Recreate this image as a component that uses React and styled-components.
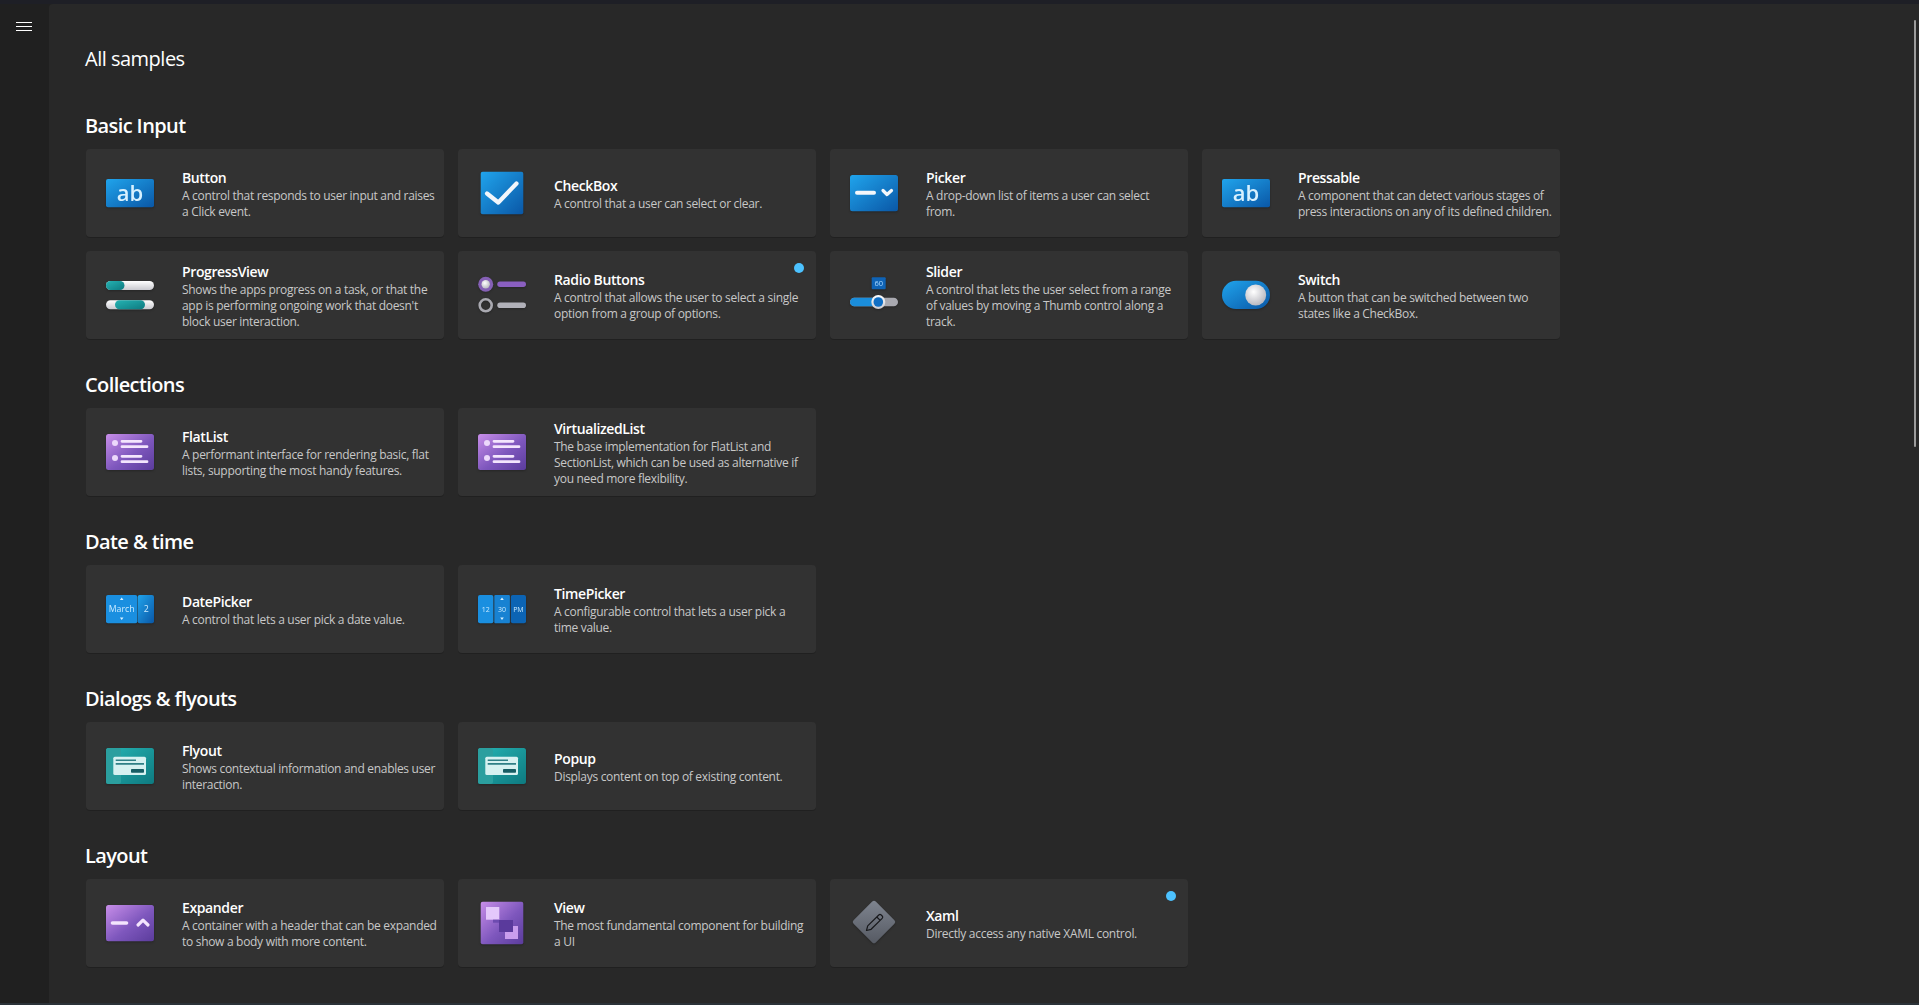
import styled, { createGlobalStyle } from "styled-components";

const GlobalStyle = createGlobalStyle`
  html, body {
    margin: 0;
    height: 100%;
    background: #202020;
    overflow: hidden;
  }
  #root {
    height: 100%;
  }
`;

const Window = styled.div`
  position: relative;
  height: 100vh;
  display: flex;
  flex-direction: column;
  font-family: "Open Sans", "Noto Sans", sans-serif;
  color: #fff;
`;

const TopStrip = styled.div`
  height: 4px;
  flex: none;
  background: #1e1f26;
`;

const BottomStrip = styled.div`
  height: 2px;
  flex: none;
  background: #2b3238;
`;

const Body = styled.div`
  flex: 1;
  min-height: 0;
  display: flex;
`;

const Sidebar = styled.nav`
  width: 49px;
  flex: none;
  background: #202020;
  padding-top: 15px;
  box-sizing: border-box;
`;

const MenuButton = styled.button`
  width: 48px;
  height: 16px;
  padding: 0;
  border: none;
  background: none;
  display: flex;
  align-items: center;
  justify-content: center;
`;

const Main = styled.main`
  flex: 1;
  min-width: 0;
  overflow: hidden;
  background: #282828;
  border-top-left-radius: 4px;
  padding: 41px 0 0 36px;
`;

const PageTitle = styled.h1`
  margin: 0 0 39px;
  font-size: 20px;
  line-height: 28px;
  font-weight: 400;
  letter-spacing: -0.5px;
`;

const Section = styled.section`
  margin-bottom: 32px;
`;

const SectionTitle = styled.h2`
  margin: 0 0 9px;
  font-size: 20px;
  line-height: 28px;
  font-weight: 600;
  letter-spacing: -0.6px;
`;

const CardGrid = styled.div`
  display: grid;
  grid-template-columns: repeat(4, 358px);
  grid-auto-rows: 88px;
  gap: 14px;
  padding-left: 1px;
`;

const Card = styled.div`
  position: relative;
  display: flex;
  align-items: center;
  padding: 0 7px 0 20px;
  background: #323232;
  border-radius: 4px;
  box-shadow: 0 1px 0 rgba(0, 0, 0, 0.18);
`;

const IconSvg = styled.svg`
  width: 48px;
  height: 48px;
  flex: none;
  margin-right: 28px;
  filter: drop-shadow(0 1px 1px rgba(0, 0, 0, 0.25));
`;

const CardText = styled.div`
  min-width: 0;
  margin-top: 2px;
`;

const CardTitle = styled.div`
  font-size: 14px;
  line-height: 20px;
  font-weight: 600;
  letter-spacing: -0.38px;
  color: #fff;
`;

const CardDescription = styled.div`
  font-size: 12px;
  line-height: 16px;
  letter-spacing: -0.3px;
  color: #c8c8c8;
  white-space: pre-line;
`;

const NewDot = styled.span`
  position: absolute;
  top: 12px;
  right: 12px;
  width: 10px;
  height: 10px;
  border-radius: 50%;
  background: #4cc2ff;
`;

const ScrollThumb = styled.div`
  position: absolute;
  top: 20px;
  right: 3px;
  width: 2px;
  height: 427px;
  background: #9c9c9c;
  border-radius: 1px;
`;

const HiddenDefs = styled.svg`
  position: absolute;
  width: 0;
  height: 0;
`;

const IconLabel = styled.text`
  font-family: "Open Sans", sans-serif;
  text-anchor: middle;
`;

function IconDefs() {
  return (
    <HiddenDefs aria-hidden="true">
      <defs>
        <linearGradient id="blue" x1="0" y1="0" x2="1" y2="1">
          <stop offset="0" stopColor="#20a4ec" />
          <stop offset="1" stopColor="#0a57a6" />
        </linearGradient>
        <linearGradient id="purple" x1="0" y1="0" x2="1" y2="1">
          <stop offset="0" stopColor="#c88ee9" />
          <stop offset="0.55" stopColor="#7e57bd" />
          <stop offset="1" stopColor="#5b3c9c" />
        </linearGradient>
        <linearGradient id="teal" x1="0" y1="0" x2="1" y2="1">
          <stop offset="0" stopColor="#25b3b3" />
          <stop offset="1" stopColor="#0e7a80" />
        </linearGradient>
        <linearGradient id="slate" x1="0" y1="0" x2="1" y2="1">
          <stop offset="0" stopColor="#7f8590" />
          <stop offset="1" stopColor="#555962" />
        </linearGradient>
        <linearGradient id="pale" x1="0" y1="0" x2="0" y2="1">
          <stop offset="0" stopColor="#ffffff" />
          <stop offset="1" stopColor="#c9c9cf" />
        </linearGradient>
        <radialGradient id="knob" cx="0.4" cy="0.35" r="0.7">
          <stop offset="0" stopColor="#ffffff" />
          <stop offset="1" stopColor="#b4b4bc" />
        </radialGradient>
      </defs>
    </HiddenDefs>
  );
}

function Icon({ children }) {
  return (
    <IconSvg viewBox="0 0 48 48" aria-hidden="true">
      {children}
    </IconSvg>
  );
}

const AbIcon = () => (
  <Icon>
    <rect y="10" width="48" height="28.3" rx="2" fill="url(#blue)" />
    <IconLabel x="24" y="31.5" fontSize="22" fontWeight="600" fill="#d8f1ff">
      ab
    </IconLabel>
  </Icon>
);

const CheckIcon = () => (
  <Icon>
    <rect x="2.7" y="2.7" width="42.6" height="42.6" rx="2" fill="url(#blue)" />
    <path
      d="M9 24.5l11.3 9L38.5 14.5"
      fill="none"
      stroke="#f2f6fb"
      strokeWidth="4.2"
      strokeLinecap="round"
      strokeLinejoin="round"
    />
  </Icon>
);

const PickerIcon = () => (
  <Icon>
    <rect y="6" width="48" height="36.3" rx="2.5" fill="url(#blue)" />
    <path d="M7 23.7h17" stroke="#f4f7fb" strokeWidth="4" strokeLinecap="round" />
    <path
      d="M33 21.5l4 4 4.5-4"
      fill="none"
      stroke="#f4f7fb"
      strokeWidth="3.2"
      strokeLinecap="round"
      strokeLinejoin="round"
    />
  </Icon>
);

const ProgressIcon = () => (
  <Icon>
    <rect y="10" width="48" height="9" rx="4.5" fill="url(#pale)" />
    <rect width="18.5" y="10" height="9" rx="4.5" fill="url(#teal)" />
    <rect y="29.2" width="48" height="9" rx="4.5" fill="url(#pale)" />
    <rect x="9" y="29.2" width="30" height="9" rx="4.5" fill="url(#teal)" />
  </Icon>
);

const RadioIcon = () => (
  <Icon>
    <circle cx="7.7" cy="13.3" r="7.5" fill="#8560b5" />
    <circle cx="7.7" cy="13.3" r="4.2" fill="url(#knob)" />
    <rect x="19.3" y="10.6" width="28.7" height="5.4" rx="2.7" fill="#8a5fc0" />
    <circle cx="7.7" cy="34.3" r="6" fill="none" stroke="#a9a9b0" strokeWidth="2.6" />
    <rect x="19.3" y="31.5" width="28.7" height="5.6" rx="2.8" fill="#b0b0b8" />
  </Icon>
);

const SliderIcon = () => (
  <Icon>
    <rect x="21.7" y="6.3" width="14" height="12" rx="1" fill="#0f63b5" />
    <IconLabel x="28.7" y="15" fontSize="7.5" fill="#a9d9ff">
      60
    </IconLabel>
    <rect y="26.7" width="48" height="8.6" rx="4.3" fill="#a9a9b0" />
    <path d="M4.3 26.7H28v8.6H4.3a4.3 4.3 0 0 1 0-8.6z" fill="#1a8ddb" />
    <circle cx="28.3" cy="31" r="7" fill="url(#pale)" />
    <circle cx="28.3" cy="31" r="4.8" fill="#0f6ec4" />
  </Icon>
);

const SwitchIcon = () => (
  <Icon>
    <rect y="9.8" width="48" height="28.3" rx="14.1" fill="url(#blue)" />
    <circle cx="33.7" cy="24" r="10.5" fill="url(#knob)" />
  </Icon>
);

const ListIcon = () => (
  <Icon>
    <rect y="6" width="48" height="36" rx="2.5" fill="url(#purple)" />
    <circle cx="9" cy="15" r="3" fill="#ecd8fb" />
    <circle cx="9" cy="30" r="3" fill="#ecd8fb" />
    <path
      d="M16 13.3h19M16 18.7h25M16 28.3h19M16 33.7h25"
      stroke="#f3e5fd"
      strokeWidth="2.8"
      strokeLinecap="round"
    />
  </Icon>
);

const DateIcon = () => (
  <Icon>
    <rect y="10" width="31.3" height="28.3" rx="2" fill="#1a8fe0" />
    <rect x="31.7" y="10" width="16.3" height="28.3" rx="2" fill="url(#blue)" />
    <path d="M15.7 12.5l1.8 2.4h-3.6zM15.7 35l1.8-2.4h-3.6z" fill="#d8f1ff" />
    <IconLabel x="15.7" y="27" fontSize="8.8" fill="#c9eaff">
      March
    </IconLabel>
    <IconLabel x="40.3" y="27" fontSize="8.8" fill="#c9eaff">
      2
    </IconLabel>
  </Icon>
);

const TimeIcon = () => (
  <Icon>
    <rect y="10" width="15.4" height="28.3" rx="2" fill="#1a8fe0" />
    <rect x="16.3" y="10" width="15.6" height="28.3" rx="1" fill="#1882d2" />
    <rect x="32.8" y="10" width="15.2" height="28.3" rx="2" fill="#0c64b4" />
    <path d="M24 12.5l1.8 2.4h-3.6zM24 35l1.8-2.4h-3.6z" fill="#d8f1ff" />
    <IconLabel x="7.7" y="26.6" fontSize="7" fill="#c9eaff">
      12
    </IconLabel>
    <IconLabel x="24" y="26.6" fontSize="7" fill="#c9eaff">
      30
    </IconLabel>
    <IconLabel x="40.4" y="26.6" fontSize="7" fill="#c9eaff">
      PM
    </IconLabel>
  </Icon>
);

const DialogIcon = () => (
  <Icon>
    <rect y="6" width="48" height="36" rx="2.5" fill="url(#teal)" />
    <rect y="6" width="15" height="36" rx="2.5" fill="#2b9f9f" />
    <rect x="7.3" y="14.7" width="32.7" height="18.3" rx="1.5" fill="#d6f1f1" />
    <path d="M9.7 18.2h20.3M9.7 21.9h28.3" stroke="#2f7f86" strokeWidth="1.6" />
    <rect x="25" y="27" width="13" height="3.8" rx="0.8" fill="#175d64" />
  </Icon>
);

const ExpanderIcon = () => (
  <Icon>
    <rect y="6" width="48" height="36.3" rx="2.5" fill="url(#purple)" />
    <path d="M6.5 24h14" stroke="#f3e5fd" strokeWidth="3.6" strokeLinecap="round" />
    <path
      d="M32 26l5-4.8 5 4.8"
      fill="none"
      stroke="#f3e5fd"
      strokeWidth="3.2"
      strokeLinecap="round"
      strokeLinejoin="round"
    />
  </Icon>
);

const ViewIcon = () => (
  <Icon>
    <rect x="2.7" y="2.7" width="42.6" height="42.6" rx="2" fill="url(#purple)" />
    <rect x="8" y="8" width="13.3" height="12.7" fill="#e4c8fb" />
    <rect x="27" y="27" width="13" height="13" fill="#c99ded" />
    <rect x="21" y="21" width="14" height="12" fill="#5a3a9c" />
    <rect x="15" y="20.7" width="6" height="3" fill="#6d4bb0" />
  </Icon>
);

const XamlIcon = () => (
  <Icon>
    <rect
      x="8.3"
      y="7.3"
      width="31.4"
      height="31.4"
      rx="2.5"
      transform="rotate(45 24 23)"
      fill="url(#slate)"
    />
    <path
      d="M16.5 31.5l1.2-4.6L28.8 16a1.7 1.7 0 0 1 2.4 0l1 1a1.7 1.7 0 0 1 0 2.4L21.1 30.3zM26.8 18l3.4 3.4"
      fill="none"
      stroke="#17181b"
      strokeWidth="1.2"
      strokeLinejoin="round"
    />
  </Icon>
);

const sections = [
  {
    title: "Basic Input",
    items: [
      { icon: AbIcon, name: "Button", text: "A control that responds to user input and raises a Click event." },
      { icon: CheckIcon, name: "CheckBox", text: "A control that a user can select or clear." },
      { icon: PickerIcon, name: "Picker", text: "A drop-down list of items a user can select\nfrom." },
      { icon: AbIcon, name: "Pressable", text: "A component that can detect various stages of press interactions on any of its defined children." },
      { icon: ProgressIcon, name: "ProgressView", text: "Shows the apps progress on a task, or that the app is performing ongoing work that doesn't block user interaction." },
      { icon: RadioIcon, name: "Radio Buttons", text: "A control that allows the user to select a single option from a group of options.", isNew: true },
      { icon: SliderIcon, name: "Slider", text: "A control that lets the user select from a range of values by moving a Thumb control along a track." },
      { icon: SwitchIcon, name: "Switch", text: "A button that can be switched between two states like a CheckBox." },
    ],
  },
  {
    title: "Collections",
    items: [
      { icon: ListIcon, name: "FlatList", text: "A performant interface for rendering basic, flat lists, supporting the most handy features." },
      { icon: ListIcon, name: "VirtualizedList", text: "The base implementation for FlatList and SectionList, which can be used as alternative if you need more flexibility." },
    ],
  },
  {
    title: "Date & time",
    items: [
      { icon: DateIcon, name: "DatePicker", text: "A control that lets a user pick a date value." },
      { icon: TimeIcon, name: "TimePicker", text: "A configurable control that lets a user pick a time value." },
    ],
  },
  {
    title: "Dialogs & flyouts",
    items: [
      { icon: DialogIcon, name: "Flyout", text: "Shows contextual information and enables user interaction." },
      { icon: DialogIcon, name: "Popup", text: "Displays content on top of existing content." },
    ],
  },
  {
    title: "Layout",
    items: [
      { icon: ExpanderIcon, name: "Expander", text: "A container with a header that can be expanded to show a body with more content." },
      { icon: ViewIcon, name: "View", text: "The most fundamental component for building a UI" },
      { icon: XamlIcon, name: "Xaml", text: "Directly access any native XAML control.", isNew: true },
    ],
  },
];

function SampleCard({ item }) {
  const CardIcon = item.icon;
  return (
    <Card>
      <CardIcon />
      <CardText>
        <CardTitle>{item.name}</CardTitle>
        <CardDescription>{item.text}</CardDescription>
      </CardText>
      {item.isNew && <NewDot />}
    </Card>
  );
}

export default function App() {
  return (
    <Window>
      <GlobalStyle />
      <IconDefs />
      <TopStrip />
      <Body>
        <Sidebar>
          <MenuButton aria-label="Menu">
            <svg width="16" height="10" viewBox="0 0 16 10" aria-hidden="true">
              <path d="M0 .5h16M0 4.5h16M0 8.5h16" stroke="#fff" strokeWidth="1" />
            </svg>
          </MenuButton>
        </Sidebar>
        <Main>
          <PageTitle>All samples</PageTitle>
          {sections.map((section) => (
            <Section key={section.title}>
              <SectionTitle>{section.title}</SectionTitle>
              <CardGrid>
                {section.items.map((item) => (
                  <SampleCard key={item.name} item={item} />
                ))}
              </CardGrid>
            </Section>
          ))}
        </Main>
      </Body>
      <BottomStrip />
      <ScrollThumb />
    </Window>
  );
}
